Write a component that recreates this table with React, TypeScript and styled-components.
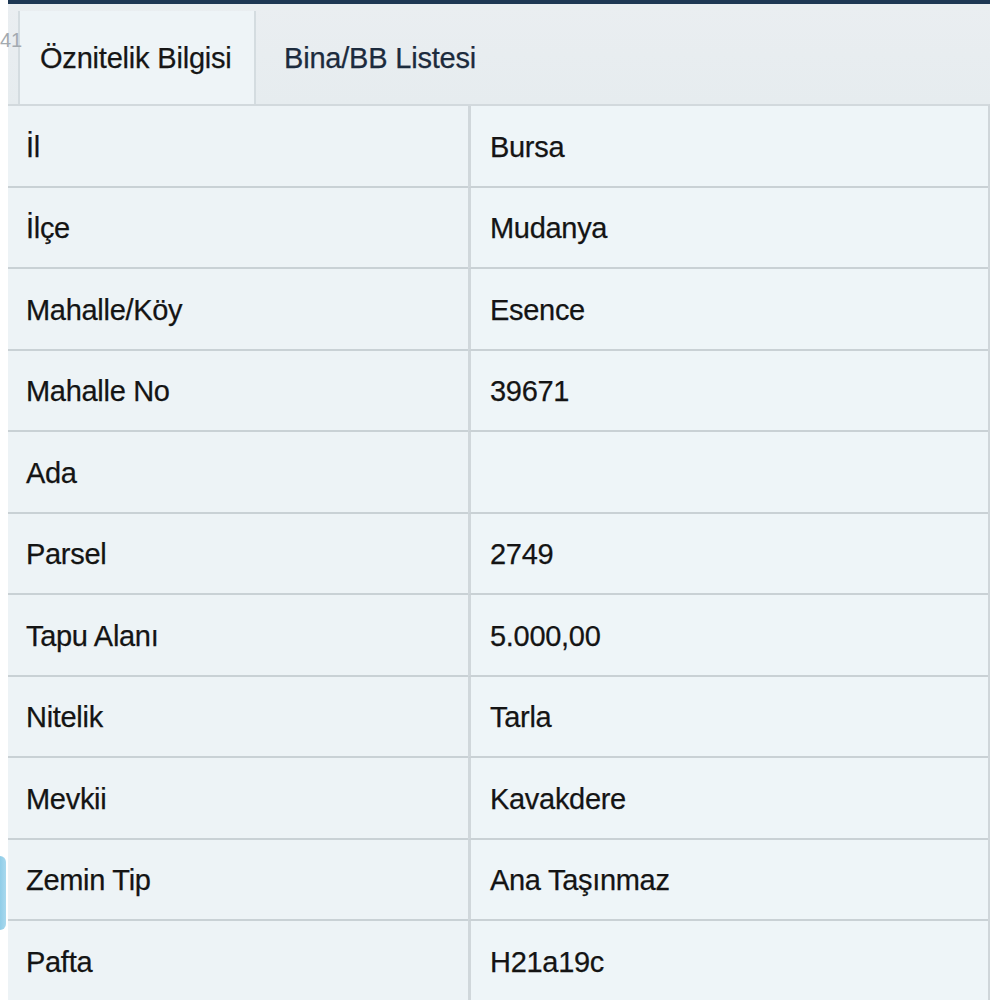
import React from "react";
import styled, { createGlobalStyle } from "styled-components";

const Global = createGlobalStyle`
  html, body { margin: 0; padding: 0; background: #ffffff; }
  body { font-family: "Liberation Sans", Arial, sans-serif; }
`;

const Page = styled.div`
  position: relative;
  width: 1000px;
  height: 1000px;
  overflow: hidden;
  background: #ffffff;
`;

const Panel = styled.div`
  margin-left: 8px;
  width: 982px;
  display: flex;
  flex-direction: column;
`;

const TopBar = styled.div`
  height: 4px;
  background: #1e3854;
`;

const TabStrip = styled.div`
  height: 100px;
  display: flex;
  align-items: flex-end;
  padding-left: 10px;
  background: linear-gradient(#eaeef1, #e6ecef);
`;

const Tab = styled.div<{ $active?: boolean }>`
  height: 93px;
  box-sizing: border-box;
  display: flex;
  align-items: center;
  padding-top: 2px;
  font-size: 29px;
  letter-spacing: -0.2px;
  -webkit-text-stroke: 0.25px currentColor;
  color: ${(p) => (p.$active ? "#161616" : "#1c2b3d")};
  background: ${(p) => (p.$active ? "#eef4f7" : "transparent")};
  border-left: ${(p) => (p.$active ? "2px solid #d4dce0" : "none")};
  border-right: ${(p) => (p.$active ? "2px solid #d4dce0" : "none")};
  width: ${(p) => (p.$active ? "238px" : "auto")};
  padding-left: ${(p) => (p.$active ? "20px" : "28px")};
`;

const SideNum = styled.span`
  position: absolute;
  left: 0px;
  top: 29px;
  font-size: 20px;
  color: #a3aab0;
`;

const SideTab = styled.div`
  position: absolute;
  left: -8px;
  top: 856px;
  width: 14px;
  height: 74px;
  border-radius: 6px;
  background: linear-gradient(90deg, #6fbde0, #a9d9ee);
`;

const Table = styled.div`
  display: grid;
  grid-template-columns: 460px 520px;
  border-top: 2px solid #d2d9dd;
  border-right: 2px solid #cfd6da;
  background: #eef4f7;
`;

const Cell = styled.div<{ $value?: boolean }>`
  height: 81.5px;
  box-sizing: border-box;
  display: flex;
  align-items: center;
  padding-top: 3px;
  padding-left: ${(p) => (p.$value ? "19px" : "18px")};
  font-size: 29px;
  letter-spacing: -0.3px;
  -webkit-text-stroke: 0.25px currentColor;
  color: #141414;
  border-bottom: 2px solid #c9d1d5;
  border-left: ${(p) => (p.$value ? "3px solid #d0d7db" : "none")};
  background: ${(p) => (p.$value ? "#eef5f8" : "#edf3f6")};
`;

const rows: [string, string][] = [
  ["İl", "Bursa"],
  ["İlçe", "Mudanya"],
  ["Mahalle/Köy", "Esence"],
  ["Mahalle No", "39671"],
  ["Ada", ""],
  ["Parsel", "2749"],
  ["Tapu Alanı", "5.000,00"],
  ["Nitelik", "Tarla"],
  ["Mevkii", "Kavakdere"],
  ["Zemin Tip", "Ana Taşınmaz"],
  ["Pafta", "H21a19c"],
];

export default function App() {
  return (
    <Page>
      <Global />
      <SideNum>41</SideNum>
      <SideTab />
      <Panel>
        <TopBar />
        <TabStrip>
          <Tab $active>Öznitelik Bilgisi</Tab>
          <Tab>Bina/BB Listesi</Tab>
        </TabStrip>
        <Table>
          {rows.map(([k, v]) => (
            <React.Fragment key={k}>
              <Cell>{k}</Cell>
              <Cell $value>{v}</Cell>
            </React.Fragment>
          ))}
        </Table>
      </Panel>
    </Page>
  );
}
